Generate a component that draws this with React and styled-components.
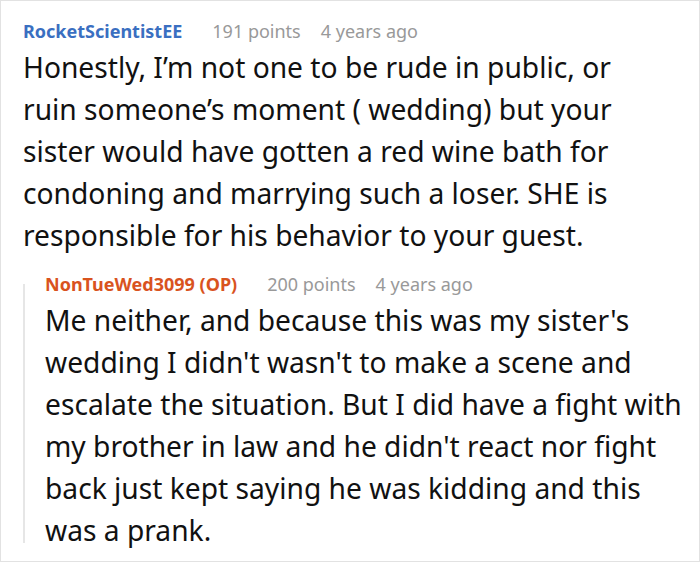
import React from 'react';
import styled, { createGlobalStyle } from 'styled-components';

const GlobalStyle = createGlobalStyle`
  html, body {
    margin: 0;
    padding: 0;
    background: #fff;
  }
  body {
    font-family: "Noto Sans", "Open Sans", sans-serif;
  }
`;

const Card = styled.div`
  box-sizing: border-box;
  width: 700px;
  height: 562px;
  border: 1px solid #e2e2e2;
  padding: 17px 15px 0 22px;
  overflow: hidden;
`;

const Comment = styled.div`
  display: flex;
  flex-direction: column;
`;

const Meta = styled.div`
  display: flex;
  align-items: baseline;
  gap: 20px;
  font-size: 18px;
  line-height: 26px;
`;

const Author = styled.span`
  font-weight: 700;
  color: ${props => (props.op ? '#d9531e' : '#3a6fc1')};
  margin-right: 10px;
`;

const Info = styled.span`
  color: #999;
`;

const Body = styled.p`
  margin: 2px 0 0 0;
  max-width: ${props => props.maxWidth || 'none'};
  font-size: 28.2px;
  line-height: 42px;
  color: #111;
`;

const Reply = styled.div`
  position: relative;
  margin-top: 15px;
  padding-left: 22px;

  &::before {
    content: '';
    position: absolute;
    left: 0;
    top: 13px;
    bottom: 8px;
    width: 2px;
    background: #e6e6e6;
  }
`;

function CommentBlock({ author, op, points, age, text, maxWidth }) {
  return (
    <Comment>
      <Meta>
        <Author op={op}>{author}</Author>
        <Info>{points} points</Info>
        <Info>{age}</Info>
      </Meta>
      <Body maxWidth={maxWidth}>{text}</Body>
    </Comment>
  );
}

export default function App() {
  return (
    <>
      <GlobalStyle />
      <Card>
        <CommentBlock
          author="RocketScientistEE"
          points={191}
          age="4 years ago"
          maxWidth="640px"
          text="Honestly, I’m not one to be rude in public, or ruin someone’s moment ( wedding) but your sister would have gotten a red wine bath for condoning and marrying such a loser. SHE is responsible for his behavior to your guest."
        />
        <Reply>
          <CommentBlock
            author="NonTueWed3099 (OP)"
            op
            points={200}
            age="4 years ago"
            text="Me neither, and because this was my sister's wedding I didn't wasn't to make a scene and escalate the situation. But I did have a fight with my brother in law and he didn't react nor fight back just kept saying he was kidding and this was a prank."
          />
        </Reply>
      </Card>
    </>
  );
}
